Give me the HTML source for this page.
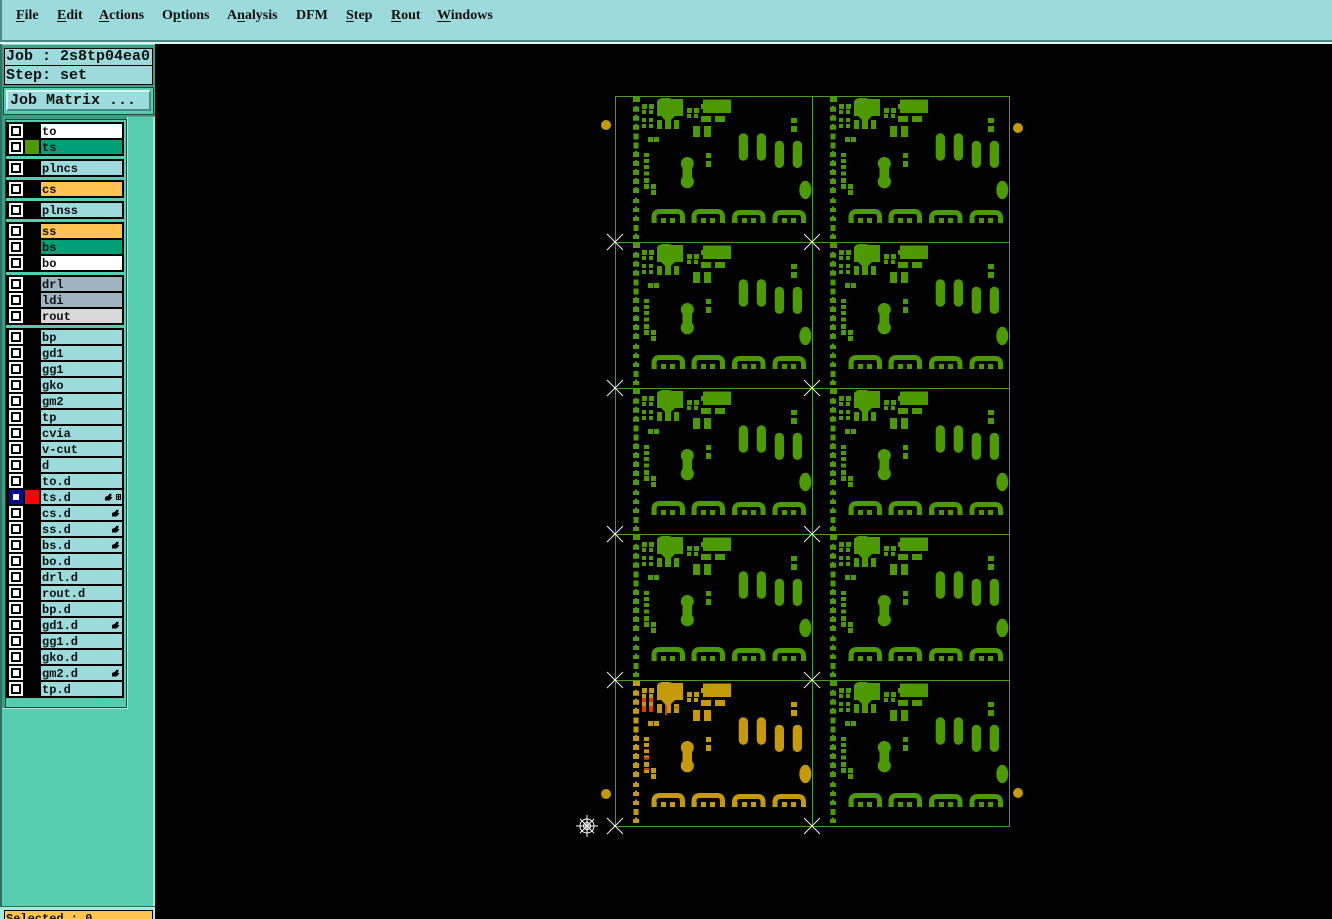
<!DOCTYPE html>
<html><head><meta charset="utf-8"><style>
html,body{margin:0;padding:0;width:1332px;height:919px;overflow:hidden;background:#000}
div{position:absolute;box-sizing:border-box}
.m{top:8px;font:bold 14px/16px "Liberation Serif",serif;color:#111;white-space:nowrap}
.m u{text-decoration-thickness:1px;text-underline-offset:2px}
.t{font:bold 15px/18px "Liberation Mono",monospace;color:#111;white-space:pre;left:2px;top:0}
.g{left:6px;width:118px;background:#000}
.r{left:0;width:118px;height:16px}
.c{left:3px;top:1px;width:14px;height:14px;background:#fff}
.c:after{content:"";position:absolute;left:2px;top:2px;width:10px;height:10px;background:#000}
.c:before{content:"";position:absolute;left:4px;top:4px;width:6px;height:6px;background:#fff;z-index:1}
.c.b{background:#0a0a90}
.c.b:after{background:#0a0a90}
.n{left:35px;top:1px;width:81px;height:14px;background:#9cdadb;font:bold 12px/17px "Liberation Mono",monospace;color:#111;padding-left:1px;white-space:pre}
.i{left:19px;top:1px;width:14px;height:14px}
.h{position:absolute;right:2px;top:3px}
</style></head><body>
<div style="left:0;top:0;width:1332px;height:44px;background:#9cdadb;border-bottom:2px solid #e4f6f4;box-shadow:inset 2px 0 0 #4d8a8a"></div>
<div style="left:0;top:40px;width:1332px;height:2px;background:#4a8787"></div>
<div class="m" style="left:16px"><u>F</u>ile</div>
<div class="m" style="left:57px"><u>E</u>dit</div>
<div class="m" style="left:99px"><u>A</u>ctions</div>
<div class="m" style="left:162px">O<u>p</u>tions</div>
<div class="m" style="left:227px">A<u>n</u>alysis</div>
<div class="m" style="left:296px">DFM</div>
<div class="m" style="left:346px"><u>S</u>tep</div>
<div class="m" style="left:391px"><u>R</u>out</div>
<div class="m" style="left:437px"><u>W</u>indows</div>

<div style="left:0;top:44px;width:157px;height:875px;background:#55cdae;border-right:2px solid #000"></div>
<div style="left:153px;top:44px;width:2px;height:863px;background:#a5eadb"></div>
<div style="left:0;top:44px;width:2px;height:863px;background:#2f6f60"></div>
<div style="left:2px;top:44px;width:153px;height:73px;background:#3d9e86;border-top:1px solid #8fdcc9"></div>
<div style="left:4px;top:48px;width:149px;height:18px;background:#9cdadb;border:1px solid #000"><div class="t" style="left:1px;top:-1px">Job : 2s8tp04ea0</div></div>
<div style="left:4px;top:65px;width:149px;height:20px;background:#9cdadb;border:1px solid #000"><div class="t" style="left:1px;top:1px">Step: set</div></div>
<div style="left:3px;top:87px;width:151px;height:28px;background:#55cdae;border:1px solid #17493d"></div>
<div style="left:6px;top:90px;width:145px;height:21px;background:#9cdadb;border:2px solid;border-color:#d9f5f3 #4a8787 #4a8787 #d9f5f3"><div class="t" style="left:2px;top:0">Job Matrix ...</div></div>

<div style="left:2px;top:117px;width:126px;height:592px;background:#3d9e86;border-right:1px solid #a5eadb;border-bottom:1px solid #a5eadb"></div>
<div style="left:5px;top:119px;width:122px;height:589px;background:#55cdae;border:1px solid #17493d"></div>

<div class="g" style="top:122px;height:34px">
<div class="r" style="top:1px"><div class="c"></div><div class="n" style="background:#fff">to</div></div>
<div class="r" style="top:17px"><div class="c"></div><div class="i" style="background:#4c9900"></div><div class="n" style="background:#00a077">ts</div></div></div>
<div class="g" style="top:159px;height:18px"><div class="r" style="top:1px"><div class="c"></div><div class="n">plncs</div></div></div>
<div class="g" style="top:180px;height:18px"><div class="r" style="top:1px"><div class="c"></div><div class="n" style="background:#ffc44f">cs</div></div></div>
<div class="g" style="top:201px;height:18px"><div class="r" style="top:1px"><div class="c"></div><div class="n">plnss</div></div></div>
<div class="g" style="top:222px;height:50px">
<div class="r" style="top:1px"><div class="c"></div><div class="n" style="background:#ffc44f">ss</div></div>
<div class="r" style="top:17px"><div class="c"></div><div class="n" style="background:#00a077">bs</div></div>
<div class="r" style="top:33px"><div class="c"></div><div class="n" style="background:#fff">bo</div></div></div>
<div class="g" style="top:275px;height:50px">
<div class="r" style="top:1px"><div class="c"></div><div class="n" style="background:#9eb5bf">drl</div></div>
<div class="r" style="top:17px"><div class="c"></div><div class="n" style="background:#9eb5bf">ldi</div></div>
<div class="r" style="top:33px"><div class="c"></div><div class="n" style="background:#d8d8d8">rout</div></div></div>

<svg width="0" height="0" style="position:absolute"><defs>
<path id="hd" d="M0 7.500V4L2.500 3L5 0.500L7 1.500L5.500 3.500L7.500 4.500L4.500 7.500Z" fill="#000"/>
</defs></svg>

<div class="g" style="top:328px;height:370px">
<div class="r" style="top:1px"><div class="c"></div><div class="n">bp</div></div>
<div class="r" style="top:17px"><div class="c"></div><div class="n">gd1</div></div>
<div class="r" style="top:33px"><div class="c"></div><div class="n">gg1</div></div>
<div class="r" style="top:49px"><div class="c"></div><div class="n">gko</div></div>
<div class="r" style="top:65px"><div class="c"></div><div class="n">gm2</div></div>
<div class="r" style="top:81px"><div class="c"></div><div class="n">tp</div></div>
<div class="r" style="top:97px"><div class="c"></div><div class="n">cvia</div></div>
<div class="r" style="top:113px"><div class="c"></div><div class="n">v-cut</div></div>
<div class="r" style="top:129px"><div class="c"></div><div class="n">d</div></div>
<div class="r" style="top:145px"><div class="c"></div><div class="n">to.d</div></div>
<div class="r" style="top:161px"><div class="c b"></div><div class="i" style="background:#f00"></div><div class="n">ts.d<svg class="h" style="right:1px" width="16" height="9"><use href="#hd"/><path d="M11.500 1.500h4v5h-4zM13.500 1.500v5M11.500 4h4" fill="none" stroke="#000"/></svg></div></div>
<div class="r" style="top:177px"><div class="c"></div><div class="n">cs.d<svg class="h" width="8" height="8"><use href="#hd"/></svg></div></div>
<div class="r" style="top:193px"><div class="c"></div><div class="n">ss.d<svg class="h" width="8" height="8"><use href="#hd"/></svg></div></div>
<div class="r" style="top:209px"><div class="c"></div><div class="n">bs.d<svg class="h" width="8" height="8"><use href="#hd"/></svg></div></div>
<div class="r" style="top:225px"><div class="c"></div><div class="n">bo.d</div></div>
<div class="r" style="top:241px"><div class="c"></div><div class="n">drl.d</div></div>
<div class="r" style="top:257px"><div class="c"></div><div class="n">rout.d</div></div>
<div class="r" style="top:273px"><div class="c"></div><div class="n">bp.d</div></div>
<div class="r" style="top:289px"><div class="c"></div><div class="n">gd1.d<svg class="h" width="8" height="8"><use href="#hd"/></svg></div></div>
<div class="r" style="top:305px"><div class="c"></div><div class="n">gg1.d</div></div>
<div class="r" style="top:321px"><div class="c"></div><div class="n">gko.d</div></div>
<div class="r" style="top:337px"><div class="c"></div><div class="n">gm2.d<svg class="h" width="8" height="8"><use href="#hd"/></svg></div></div>
<div class="r" style="top:353px"><div class="c"></div><div class="n">tp.d</div></div>
</div>

<div style="left:0;top:906px;width:155px;height:13px;background:#a5eadb;border-top:1px solid #2f6f60"></div>
<div style="left:4px;top:910px;width:149px;height:9px;background:#ffc44f;border:1px solid #000;border-bottom:0;overflow:hidden"><div style="left:1px;top:1px;font:bold 12px/14px 'Liberation Mono',monospace;color:#111;white-space:pre">Selected : 0</div></div>

<svg width="1332" height="919" style="position:absolute;left:0;top:0">
<defs>
<path id="p" d="M18 -2.500H20V-3.500H22V-2.500H24V2.500H18Z"/>
<g id="b" fill="currentColor">
<rect x="18" y="1" width="7" height="5"/>
<use href="#p" y="13.300"/><use href="#p" y="22.300"/><use href="#p" y="31.300"/>
<rect x="18.500" y="37.500" width="5" height="6"/><rect x="18.500" y="46.500" width="5" height="6"/>
<use href="#p" y="58.500"/><use href="#p" y="67.500"/><use href="#p" y="76.500"/><use href="#p" y="85.500"/><use href="#p" y="94.500"/>
<path d="M18 103h2v-1.500h2v1.500h2v4h-6zM18 112h2v-1.500h2v1.500h2v4h-6zM18 121h2v-1.500h2v1.500h2v4h-6z"/>
<rect x="18.500" y="129" width="5" height="6"/>
<path d="M18 139h2v-1.500h2v1.500h2v4h-6z"/>
<!-- small upper-left pads -->
<rect x="27" y="8" width="5" height="5"/><rect x="34" y="8" width="5" height="5"/>
<rect x="27" y="14" width="4" height="4"/><rect x="34" y="14" width="4" height="4"/>
<rect x="27" y="22" width="4" height="4"/><rect x="34" y="22" width="4" height="4"/>
<rect x="27" y="28" width="4" height="4"/><rect x="34" y="28" width="4" height="4"/>
<rect x="33" y="41" width="5" height="5"/><rect x="39" y="41" width="5" height="5"/>
<!-- big shape -->
<path d="M42 5L44 3L47 2H54L57 3H68V20H60L56 24V33H50V24L46 20H42Z"/>
<rect x="42" y="24" width="5" height="9"/><rect x="59" y="24" width="5" height="9"/>
<!-- right block -->
<path d="M88 3.500H116V17H88V13H86V8H88Z"/>
<rect x="86" y="20" width="10" height="6"/><rect x="100" y="20" width="10" height="6"/>
<rect x="78" y="30" width="7" height="11"/><rect x="89" y="30" width="7" height="11"/>
<rect x="72" y="12" width="5" height="5"/><rect x="79" y="12" width="5" height="5"/>
<rect x="72" y="18" width="4" height="4"/><rect x="79" y="18" width="4" height="4"/>
<!-- vertical small pads -->
<rect x="29" y="57" width="5" height="4"/><rect x="29" y="63" width="5" height="4"/><rect x="29" y="69" width="5" height="4"/><rect x="29" y="75.500" width="5" height="4"/><rect x="29" y="82" width="5" height="5"/><rect x="29" y="88" width="5" height="5"/>
<rect x="36" y="88" width="5" height="5"/><rect x="36" y="94" width="5" height="5"/>
<!-- dogbone -->
<circle cx="72.300" cy="67.500" r="6.500"/><circle cx="72.300" cy="85.700" r="6.600"/><rect x="67.500" y="67" width="9.500" height="19"/>
<rect x="91" y="57" width="5" height="5"/><rect x="91" y="65" width="5" height="6"/>
<!-- capsules -->
<rect x="123.700" y="37.300" width="9.300" height="27.400" rx="4.600"/><rect x="141.700" y="37.300" width="9.300" height="27.400" rx="4.600"/>
<rect x="159.700" y="44.700" width="9.300" height="27.300" rx="4.600"/><rect x="177.700" y="44.700" width="9.300" height="27.300" rx="4.600"/>
<rect x="176" y="22" width="6" height="5"/><rect x="176" y="30" width="6" height="6"/>
<ellipse cx="190.300" cy="94" rx="6" ry="9.200"/>
<!-- bridges -->
<g fill="none" stroke="currentColor" stroke-width="5"><path d="M39 127V121Q39 115.500 45 115.500H62Q67.500 115.500 67.500 121V127"/>
<path d="M79 127V121Q79 115.500 85 115.500H102Q107.500 115.500 107.500 121V127"/>
<path d="M119.500 127V122Q119.500 116.500 125.500 116.500H142.500Q148 116.500 148 122V127"/>
<path d="M160 127V122Q160 116.500 166 116.500H183Q188.500 116.500 188.500 122V127"/></g>
<rect x="36.700" y="122" width="5" height="5"/><rect x="65" y="122" width="5" height="5"/>
<rect x="76.700" y="122" width="5" height="5"/><rect x="105" y="122" width="5" height="5"/>
<rect x="117.500" y="122" width="5" height="5"/><rect x="145.500" y="122" width="5" height="5"/>
<rect x="157.500" y="122" width="5" height="5"/><rect x="186" y="122" width="5" height="5"/>
<rect x="46" y="122" width="5" height="5"/><rect x="55" y="122" width="5" height="5"/>
<rect x="86" y="122" width="5" height="5"/><rect x="95" y="122" width="5" height="5"/>
<rect x="127" y="122" width="5" height="5"/><rect x="136" y="122" width="5" height="5"/>
<rect x="167" y="122" width="5" height="5"/><rect x="176" y="122" width="5" height="5"/>
</g>
<path id="x" d="M-8-8L8 8M-8 8L8-8M0 -1V1M-1 0H1" stroke="#f0f0f0" stroke-width="1" fill="none"/>
</defs>
<g style="color:#4c9900">
<use href="#b" x="615" y="96"/><use href="#b" x="812" y="96"/>
<use href="#b" x="615" y="242"/><use href="#b" x="812" y="242"/>
<use href="#b" x="615" y="388"/><use href="#b" x="812" y="388"/>
<use href="#b" x="615" y="534"/><use href="#b" x="812" y="534"/>
<use href="#b" x="812" y="680"/>
</g>
<g style="color:#c49a08"><use href="#b" x="615" y="680"/></g>
<g fill="#e03a00"><rect x="642" y="698" width="4" height="4"/><rect x="649" y="698" width="4" height="4"/><rect x="642" y="706" width="4" height="6"/><rect x="649" y="706" width="4" height="6"/><rect x="665" y="705" width="2" height="10"/><rect x="674" y="707" width="5" height="1"/><rect x="644" y="749" width="5" height="1"/><rect x="644" y="757" width="5" height="2"/><rect x="644" y="768" width="5" height="2"/></g>
<g fill="none" stroke="#4c9a2a" stroke-width="1">
<path d="M615.500 96.500H1009.500V826.500H615.500ZM812.500 96.500V826.500M615.500 242.500H1009.500M615.500 388.500H1009.500M615.500 534.500H1009.500M615.500 680.500H1009.500"/>
</g>
<g fill="#c49a08"><circle cx="606" cy="125" r="5"/><circle cx="1018" cy="128" r="5"/><circle cx="606" cy="794" r="5"/><circle cx="1018" cy="793" r="5"/></g>
<use href="#x" x="615" y="242"/><use href="#x" x="812" y="242"/>
<use href="#x" x="615" y="388"/><use href="#x" x="812" y="388"/>
<use href="#x" x="615" y="534"/><use href="#x" x="812" y="534"/>
<use href="#x" x="615" y="680"/><use href="#x" x="812" y="680"/>
<use href="#x" x="615" y="826"/><use href="#x" x="812" y="826"/>
<g fill="none" stroke="#fff" stroke-width="1"><circle cx="587" cy="826" r="7"/><circle cx="587" cy="826" r="3.500"/><path d="M587 815V837M576 826H598M580 819L594 833M594 819L580 833"/></g>
</svg>
</body></html>
